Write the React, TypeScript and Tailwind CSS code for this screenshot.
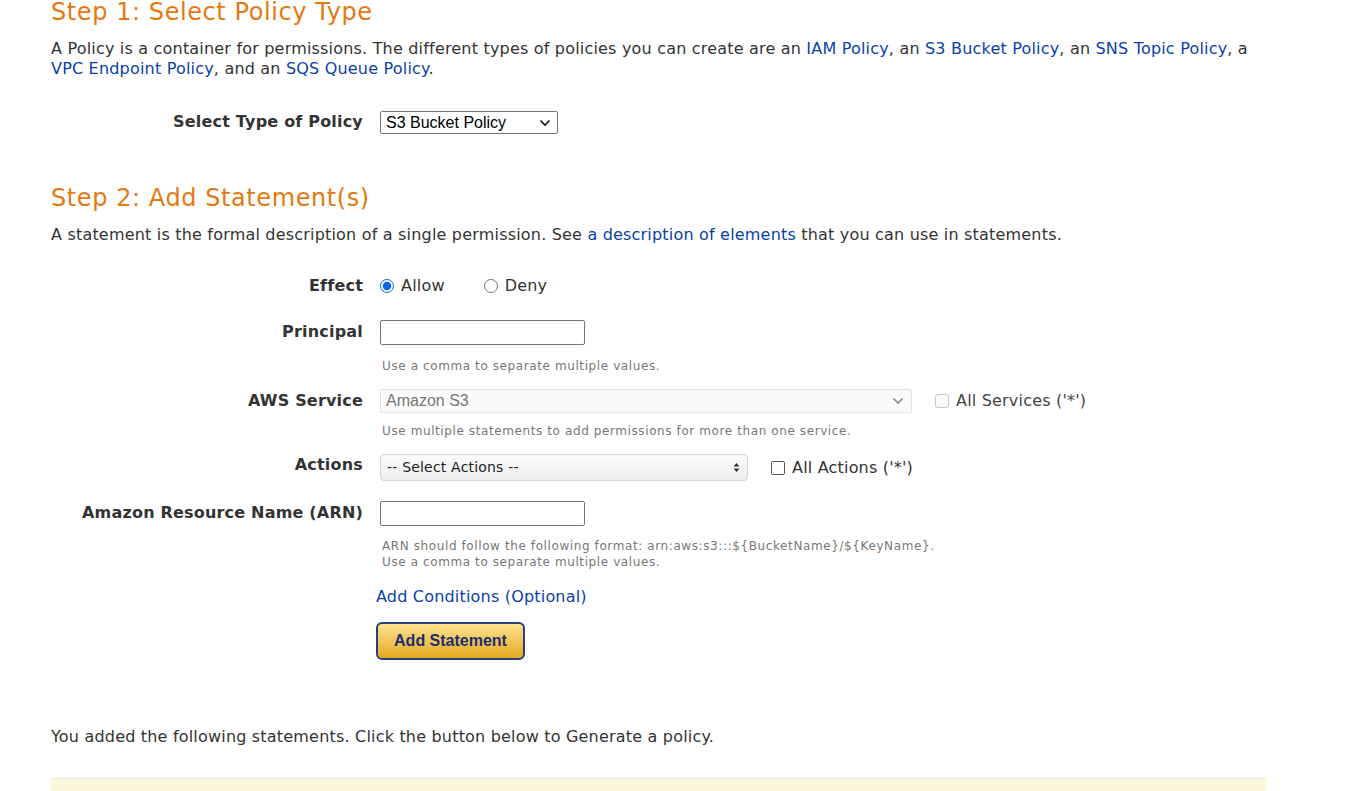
import React from 'react';

const Chevron = ({ color = '#333' }: { color?: string }) => (
  <svg width="12" height="8" viewBox="0 0 12 8" fill="none">
    <path d="M1.5 1.5 L6 6 L10.5 1.5" stroke={color} strokeWidth="1.6" />
  </svg>
);

const UpDown = () => (
  <svg width="7" height="11" viewBox="0 0 7 11">
    <path d="M3.5 1 L6.5 4.5 H0.5 Z" fill="#333" />
    <path d="M3.5 10 L6.5 6.5 H0.5 Z" fill="#333" />
  </svg>
);

// etiqueta + control en dos columnas
const Row = ({
  label,
  children,
  hint,
  labelPt = 'pt-0',
  hintMt = 'mt-[13px]',
}: {
  label: string;
  children: React.ReactNode;
  hint?: React.ReactNode;
  labelPt?: string;
  hintMt?: string;
}) => (
  <div className="flex items-start">
    <div className={`w-[312px] shrink-0 text-right font-bold text-[#333] text-[16px] leading-[22px] ${labelPt}`}>{label}</div>
    <div className="ml-[17px]">
      {children}
      {hint && <div className={`text-[12px] leading-[16px] tracking-[0.05em] text-[#777] pl-[2px] ${hintMt}`}>{hint}</div>}
    </div>
  </div>
);

export default function App() {
  return (
    <div className="bg-white min-h-[791px] overflow-hidden text-[#333] text-[16px] tracking-[0.012em]" style={{ fontFamily: '"DejaVu Sans", Verdana, sans-serif' }}>
      <div className="pl-[51px] w-[1266px]">
        <h2 className="text-[#e47911] text-[24px] leading-[28px] tracking-[0.024em] -mt-[2px]">Step 1: Select Policy Type</h2>
        <p className="mt-[13px] text-[16px] leading-[20px]">
          A Policy is a container for permissions. The different types of policies you can create are an{' '}
          <a className="text-[#0a3fa8]">IAM Policy</a>, an <a className="text-[#0a3fa8]">S3 Bucket Policy</a>, an{' '}
          <a className="text-[#0a3fa8]">SNS Topic Policy</a>, a <a className="text-[#0a3fa8]">VPC Endpoint Policy</a>, and an{' '}
          <a className="text-[#0a3fa8]">SQS Queue Policy</a>.
        </p>

        <div className="mt-[32px] flex items-center">
          <div className="w-[312px] text-right font-bold text-[16px] -mt-[2px]">Select Type of Policy</div>
          <div
            className="ml-[17px] w-[178px] h-[23px] border border-[#767676] rounded-[2px] flex items-center justify-between pl-[5px] pr-[6px] text-[16px] tracking-normal text-black"
            style={{ fontFamily: '"Liberation Sans", Arial, sans-serif' }}
          >
            <span>S3 Bucket Policy</span>
            <Chevron color="#111" />
          </div>
        </div>

        <h2 className="text-[#e47911] text-[24px] leading-[28px] tracking-[0.024em] mt-[50px]">Step 2: Add Statement(s)</h2>
        <p className="mt-[13px] text-[16px] leading-[20px]">
          A statement is the formal description of a single permission. See{' '}
          <a className="text-[#0a3fa8]">a description of elements</a> that you can use in statements.
        </p>

        <div className="mt-[30px] flex flex-col">
          <Row label="Effect">
            <div className="flex items-center h-[22px] text-[16px]">
              <input type="radio" defaultChecked name="e" className="w-[14px] h-[14px] m-0 accent-[#0b63e5]" />
              <span className="ml-[7px]">Allow</span>
              <input type="radio" name="e" className="w-[14px] h-[14px] m-0 ml-[39px]" />
              <span className="ml-[7px]">Deny</span>
            </div>
          </Row>

          <div className="mt-[24px]">
            <Row label="Principal" hint="Use a comma to separate multiple values.">
              <div className="w-[205px] h-[25px] border border-[#767676] rounded-[2px] -mt-[1px]" />
            </Row>
          </div>

          <div className="mt-[15px]">
            <Row
              label="AWS Service"
              hint="Use multiple statements to add permissions for more than one service."
              labelPt="pt-[1px]"
              hintMt="mt-[10px]"
            >
              <div className="flex items-center">
                <div
                  className="w-[532px] h-[24px] border border-[#e2e2e2] bg-[#fafafa] rounded-[2px] flex items-center justify-between pl-[5px] pr-[7px] text-[#777] text-[16px] tracking-normal"
                  style={{ fontFamily: '"Liberation Sans", Arial, sans-serif' }}
                >
                  <span>Amazon S3</span>
                  <Chevron color="#888" />
                </div>
                <div className="ml-[23px] w-[14px] h-[14px] border border-[#c8c8c8] rounded-[3px] bg-[#fafafa]" />
                <span className="ml-[7px] text-[#444]">All Services ('*')</span>
              </div>
            </Row>
          </div>

          <div className="mt-[15px]">
            <Row label="Actions">
              <div className="flex items-center">
                <div className="w-[368px] h-[27px] border border-[#d6d6d6] rounded-[4px] bg-gradient-to-b from-[#fbfbfb] to-[#ededed] flex items-center justify-between pl-[6px] pr-[7px] text-[14px] text-[#222]">
                  <span>-- Select Actions --</span>
                  <UpDown />
                </div>
                <div className="ml-[23px] w-[14px] h-[14px] border border-[#555] rounded-[2px]" />
                <span className="ml-[7px]">All Actions ('*')</span>
              </div>
            </Row>
          </div>

          <div className="mt-[21px]">
            <Row
              label="Amazon Resource Name (ARN)"
              hintMt="mt-[12px]"
              hint={
                <>
                  ARN should follow the following format: arn:aws:s3:::$&#123;BucketName&#125;/$&#123;KeyName&#125;.
                  <br />
                  Use a comma to separate multiple values.
                </>
              }
            >
              <div className="w-[205px] h-[25px] border border-[#767676] rounded-[2px] -mt-[1px]" />
            </Row>
          </div>

          <div className="ml-[325px] mt-[15px]">
            <a className="text-[#0a3fa8] text-[16px] leading-[22px]">Add Conditions (Optional)</a>
            <div className="mt-[13px]">
              <button
                className="w-[149px] h-[38px] rounded-[6px] border-2 border-[#26407f] bg-gradient-to-b from-[#fde28c] to-[#e4a90b] text-[#1c2f6b] font-bold text-[16px] tracking-normal"
                style={{ fontFamily: '"Liberation Sans", Arial, sans-serif' }}
              >
                Add Statement
              </button>
            </div>
          </div>
        </div>

        <p className="mt-[67px] text-[16px] leading-[20px]">You added the following statements. Click the button below to Generate a policy.</p>

        <div className="mt-[31px] h-[40px] bg-[#fbf7dc] border-t border-[#efe9c6]" />
      </div>
    </div>
  );
}
